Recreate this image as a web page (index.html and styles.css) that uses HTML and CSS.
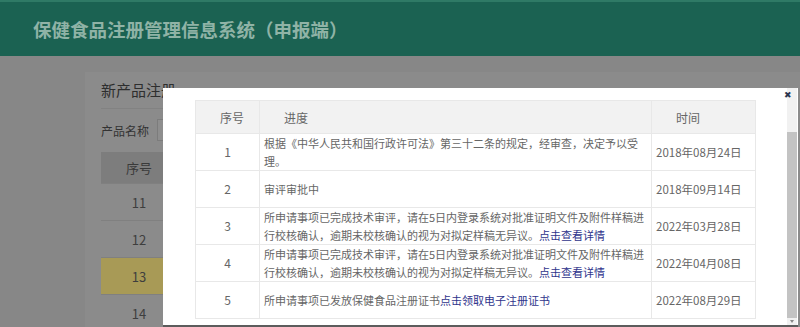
FILE: index.html
```html
<!DOCTYPE html>
<html lang="zh-CN">
<head>
    <meta charset="UTF-8">
    <meta name="viewport" content="width=device-width, initial-scale=1.0">
    <title>保健食品注册管理信息系统（申报端）</title>
    <link rel="stylesheet" href="styles.css">
</head>
<body>
    <header class="top-bar">
        <h1>保健食品注册管理信息系统（申报端）</h1>
    </header>

    <main class="page">
        <section class="card">
            <h2 class="card-title">新产品注册</h2>
            <div class="search-row">
                <label for="product-name">产品名称</label>
                <input id="product-name" type="text">
            </div>
            <table class="list-table">
                <thead>
                    <tr><th>序号</th><th></th></tr>
                </thead>
                <tbody>
                    <tr><td>11</td><td></td></tr>
                    <tr><td>12</td><td></td></tr>
                    <tr class="selected"><td>13</td><td></td></tr>
                    <tr><td>14</td><td></td></tr>
                </tbody>
            </table>
        </section>
    </main>

    <div class="modal">
        <div class="modal-body">
            <table class="progress-table">
                <colgroup>
                    <col class="col-no">
                    <col class="col-text">
                    <col class="col-date">
                </colgroup>
                <thead>
                    <tr><th>序号</th><th>进度</th><th>时间</th></tr>
                </thead>
                <tbody>
                    <tr>
                        <td class="num">1</td>
                        <td>根据《中华人民共和国行政许可法》第三十二条的规定，经审查，决定予以受理。</td>
                        <td>2018年08月24日</td>
                    </tr>
                    <tr>
                        <td class="num">2</td>
                        <td>审评审批中</td>
                        <td>2018年09月14日</td>
                    </tr>
                    <tr>
                        <td class="num">3</td>
                        <td>所申请事项已完成技术审评，请在5日内登录系统对批准证明文件及附件样稿进<br>行校核确认，逾期未校核确认的视为对拟定样稿无异议。<a href="#">点击查看详情</a></td>
                        <td>2022年03月28日</td>
                    </tr>
                    <tr>
                        <td class="num">4</td>
                        <td>所申请事项已完成技术审评，请在5日内登录系统对批准证明文件及附件样稿进<br>行校核确认，逾期未校核确认的视为对拟定样稿无异议。<a href="#">点击查看详情</a></td>
                        <td>2022年04月08日</td>
                    </tr>
                    <tr>
                        <td class="num">5</td>
                        <td>所申请事项已发放保健食品注册证书<a href="#">点击领取电子注册证书</a></td>
                        <td>2022年08月29日</td>
                    </tr>
                </tbody>
            </table>
        </div>
        <div class="scrollbar">
            <div class="thumb"></div>
            <div class="arrow"></div>
        </div>
        <button class="close" aria-label="关闭">&#x2716;</button>
    </div>
</body>
</html>
```

FILE: styles.css
```css
html, body {
    margin: 0;
    padding: 0;
}
body {
    width: 800px;
    height: 327px;
    overflow: hidden;
    position: relative;
    background: #878787;
    font-family: "Noto Sans CJK SC", "Noto Sans", sans-serif;
}
.top-bar {
    height: 54px;
    background: #1b6252;
    border-top: 2px solid #2f7a66;
    display: flex;
    align-items: center;
    padding-left: 33px;
}
.top-bar h1 {
    margin: 0 0 1px;
    font-size: 18.5px;
    font-weight: 700;
    color: #8fb3a6;
}
.page {
    padding: 16px 0 0 85px;
}
.card {
    background: #8b8b8b;
    height: 260px;
    padding: 0 16px;
}
.card-title {
    margin: 0;
    height: 36px;
    line-height: 36px;
    font-size: 15px;
    font-weight: 400;
    color: #2e2e2e;
    border-bottom: 1px solid #828282;
}
.search-row {
    display: flex;
    align-items: center;
    height: 22px;
    margin-top: 10px;
    font-size: 12px;
    color: #333;
}
.search-row input {
    margin-left: 8px;
    width: 200px;
    height: 20px;
    padding: 0;
    border: 1px solid #7c7c7c;
    background: #8e8e8e;
}
.list-table {
    margin-top: 11px;
    border-collapse: collapse;
    width: 500px;
    font-size: 13px;
    color: #3e3e3e;
}
.list-table th,
.list-table td {
    height: 36px;
    padding: 0;
    border-bottom: 1px solid #808080;
    text-align: center;
    font-weight: 400;
}
.list-table th {
    height: 31px;
    background: #7d7d7d;
    color: #3a3a3a;
}
.list-table th:first-child,
.list-table td:first-child {
    width: 76px;
}
.list-table tr.selected td {
    background: #a89a56;
}

.modal {
    position: absolute;
    left: 163px;
    top: 88px;
    width: 635px;
    height: 237px;
    background: #fff;
    display: flex;
    border-bottom: 2px solid #5c5c5c;
}
.modal-body {
    flex: 1;
    padding: 12px 31px 0 32px;
}
.progress-table {
    width: 560px;
    border-collapse: collapse;
    table-layout: fixed;
    font-size: 11px;
    color: #666;
}
.col-no { width: 64px; }
.col-text { width: 392px; }
.col-date { width: 104px; }
.progress-table th,
.progress-table td {
    border: 1px solid #e8e8e8;
}
.progress-table th {
    height: 32px;
    padding: 0 0 0 24px;
    background: #f2f2f2;
    text-align: left;
    font-size: 12px;
    font-weight: 400;
    color: #666;
}
.progress-table td {
    height: 36px;
    padding: 0 4px;
    line-height: 18px;
    vertical-align: middle;
    font-size: 11px;
}
.progress-table td:last-child {
    font-size: 11.5px;
}
.progress-table td.num {
    text-align: center;
    font-size: 12px;
}
.progress-table a {
    color: #2f348c;
    text-decoration: none;
}
.scrollbar {
    width: 10px;
    margin-right: 1px;
    background: #f1f1f1;
    display: flex;
    flex-direction: column;
    justify-content: flex-end;
}
.thumb {
    height: 186px;
    background: #c3c3c3;
    margin-bottom: 2px;
}
.arrow {
    height: 5px;
    position: relative;
}
.arrow::before {
    content: "";
    position: absolute;
    left: 3px;
    top: 0;
    border-left: 2px solid transparent;
    border-right: 2px solid transparent;
    border-top: 3px solid #888;
}
.close {
    position: absolute;
    top: 3px;
    right: 6px;
    padding: 0;
    border: none;
    background: none;
    font-size: 9px;
    line-height: 9px;
    color: #2b3550;
    cursor: pointer;
}
```
